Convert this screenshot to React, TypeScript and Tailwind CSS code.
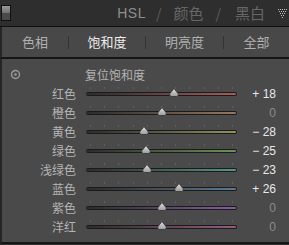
import { ReactNode } from "react";

const CJK = "font-['Noto_Sans_CJK_SC','Noto_Sans',sans-serif]";

type Row = { label: string; value: number; track: string };

const rows: Row[] = [
  { label: "红色", value: 18, track: "to-[#a85a5a]" },
  { label: "橙色", value: 0, track: "to-[#94785e]" },
  { label: "黄色", value: -28, track: "to-[#949258]" },
  { label: "绿色", value: -25, track: "to-[#6a925a]" },
  { label: "浅绿色", value: -23, track: "to-[#55968a]" },
  { label: "蓝色", value: 26, track: "to-[#5a7a96]" },
  { label: "紫色", value: 0, track: "to-[#8c5aa2]" },
  { label: "洋红", value: 0, track: "to-[#965a84]" },
];

function formatValue(v: number) {
  if (v > 0) return `+ ${v}`;
  if (v < 0) return `− ${-v}`;
  return "0";
}

function Thumb() {
  return (
    <svg width="10" height="9" viewBox="0 0 10 9">
      <defs>
        <linearGradient id="thumbFill" x1="0" y1="0" x2="0" y2="1">
          <stop offset="0" stopColor="#e2e2e2" />
          <stop offset="1" stopColor="#9a9a9a" />
        </linearGradient>
      </defs>
      <path
        d="M5 0.5 L9.4 6 Q9.6 8.5 7.4 8.5 L2.6 8.5 Q0.4 8.5 0.6 6 Z"
        fill="url(#thumbFill)"
        stroke="#333"
        strokeWidth="0.8"
      />
    </svg>
  );
}

function Slider({ value, track }: { value: number; track: string }) {
  return (
    <div className="relative w-[151px] h-[19px]">
      <div className="absolute inset-x-[4px] top-[3px] h-[2px] flex justify-between">
        {Array.from({ length: 11 }).map((_, i) => (
          <div key={i} className="w-px h-full bg-[#5f5f5f]" />
        ))}
      </div>
      <div className="absolute inset-x-0 top-[8px] h-[4px] rounded-full bg-[#1b1b1b] pt-px pb-px pr-px">
        <div className={`h-full rounded-full bg-linear-to-r from-[#2c2c2c] ${track}`} />
      </div>
      <div className="absolute top-[4px]" style={{ left: 71 + value * 0.64 }}>
        <Thumb />
      </div>
    </div>
  );
}

function Tab({ children, active, className }: { children: ReactNode; active?: boolean; className: string }) {
  return (
    <div className={`${className} flex justify-center text-[13px] ${active ? "text-[#ececec]" : "text-[#b0b0b0]"}`}>
      {children}
    </div>
  );
}

function Sep() {
  return <div className="w-px h-[13px] bg-[#333]" />;
}

export default function App() {
  return (
    <div className={`w-[289px] h-[245px] bg-[#2e2e2e] overflow-hidden ${CJK}`}>
      {/* header */}
      <div className="h-[27px] flex items-center border-b border-[#111]">
        <div className="ml-[1px] w-[10px] h-[16px] border border-[#111] flex flex-col">
          <div className="flex-1 bg-linear-to-b from-[#9a9a9a] to-[#707070]" />
          <div className="flex-1 bg-[#4a4a4a]" />
        </div>
        <div className="flex-1" />
        <span className="font-['Liberation_Sans',sans-serif] text-[14px] text-[#8e8e8e] tracking-[0.5px]">HSL</span>
        <span className="ml-[10px] text-[14px] text-[#5c5c5c]">/</span>
        <span className="ml-[12px] text-[15px] text-[#666]">颜色</span>
        <span className="ml-[12px] text-[14px] text-[#5c5c5c]">/</span>
        <span className="ml-[14px] text-[15px] text-[#666]">黑白</span>
        <svg className="ml-[13px] mr-[2px]" width="9" height="9" viewBox="0 0 9 9" fill="#bdbdbd">
          {[0, 2, 4, 6, 8].map((x) => <rect key={`a${x}`} x={x} y={0} width="1" height="1" />)}
          {[1, 3, 5, 7].map((x) => <rect key={`b${x}`} x={x} y={2} width="1" height="1" />)}
          {[2, 4, 6].map((x) => <rect key={`c${x}`} x={x} y={4} width="1" height="1" />)}
          {[3, 5].map((x) => <rect key={`d${x}`} x={x} y={6} width="1" height="1" />)}
          <rect x={4} y={8} width="1" height="1" />
        </svg>
      </div>

      {/* tabs */}
      <div className="h-[32px] flex items-center bg-[#484848] border-l-2 border-[#262626] border-b-2 border-b-[#161616]">
        <Tab className="w-[66px]">色相</Tab>
        <Sep />
        <Tab className="w-[76px]" active>饱和度</Tab>
        <Sep />
        <Tab className="w-[77px]">明亮度</Tab>
        <Sep />
        <Tab className="flex-1">全部</Tab>
      </div>

      {/* panel */}
      <div className="h-[185px] bg-[#4a4a4a] border-l-2 border-[#262626] border-b-2 border-b-[#161616] pt-[6px]">
        <div className="h-[19px] flex items-center">
          <svg className="ml-[8px]" width="11" height="11" viewBox="0 0 11 11">
            <circle cx="5.5" cy="5.5" r="4" fill="none" stroke="#9a9a9a" strokeWidth="1.4" />
            <circle cx="5.5" cy="5.5" r="1.3" fill="#9a9a9a" />
          </svg>
          <span className="ml-[64px] text-[12px] text-[#b4b4b4]">复位饱和度</span>
        </div>
        {rows.map((r) => (
          <div key={r.label} className="h-[19px] flex items-center">
            <div className="w-[74px] text-right text-[12px] text-[#b4b4b4]">{r.label}</div>
            <div className="ml-[10px]">
              <Slider value={r.value} track={r.track} />
            </div>
            <div
              className={`w-[39px] text-right text-[12px] font-['Liberation_Sans',sans-serif] ${
                r.value === 0 ? "text-[#8a8a8a]" : "text-[#e8e8e8]"
              }`}
            >
              {formatValue(r.value)}
            </div>
          </div>
        ))}
      </div>
    </div>
  );
}
